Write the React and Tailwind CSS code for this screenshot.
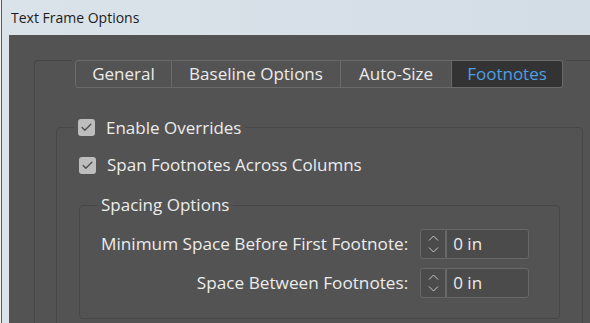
import { Check } from 'lucide-react';

const tabs = [
  { label: 'General', w: 'w-[97px]' },
  { label: 'Baseline Options', w: 'w-[169px]' },
  { label: 'Auto-Size', w: 'w-[111px]' },
  { label: 'Footnotes', w: 'w-[111px]', active: true },
];

function Checkbox() {
  return (
    <span className="w-[17px] h-[17px] rounded-[3px] bg-[#bdbdbd] flex items-center justify-center shrink-0">
      <Check className="w-[13px] h-[13px] text-[#4e4e4e]" strokeWidth={2.5} />
    </span>
  );
}

function Spinner({ value }) {
  return (
    <div className="flex h-[30px]">
      <div className="w-[26px] h-full border border-[#686868] rounded-l-[3px] bg-[#4b4b4b] flex flex-col items-center justify-between py-[5px]">
        <svg width="11" height="6" viewBox="0 0 11 6" className="text-[#c8c8c8]">
          <path d="M1 5.5 L5.5 1 L10 5.5" fill="none" stroke="currentColor" strokeWidth="1" />
        </svg>
        <svg width="11" height="6" viewBox="0 0 11 6" className="text-[#c8c8c8]">
          <path d="M1 0.5 L5.5 5 L10 0.5" fill="none" stroke="currentColor" strokeWidth="1" />
        </svg>
      </div>
      <div className="w-[83px] h-full border border-[#686868] rounded-r-[3px] bg-[#4b4b4b] flex items-center pl-[6px] text-[17px] text-[#ececec]">
        {value}
      </div>
    </div>
  );
}

export default function App() {
  return (
    <div
      className="w-[590px] h-[323px] overflow-hidden flex bg-[#d9e1e8] text-[17px]"
      style={{ fontFamily: '"Open Sans", "Noto Sans", sans-serif' }}
    >
      {/* sliver of the app behind */}
      <div className="w-[2px] h-full bg-[#f2f2f2] border-r border-[#5a5a5a]" />

      <div className="flex-1 min-h-0 flex flex-col rounded-tl-[6px] bg-[#dae2ea]">
        <div className="h-[35px] shrink-0 flex items-center pl-[9px] pb-[1px] text-[14px] text-[#1b1b1b] bg-gradient-to-r from-[#dbe3ea] to-[#d3dde6]">
          Text Frame Options
        </div>

        <div className="flex-1 min-h-0 ml-[7px] bg-[#535353] pl-[25px] pt-[25px]">
          <div className="h-full border-l border-t border-[#474747] rounded-tl-[4px]">
            {/* tab strip */}
            <div className="flex -mt-px">
              <div className="ml-[37px] px-[3px] bg-[#535353] flex">
                {tabs.map((t, i) => (
                  <div
                    key={t.label}
                    className={`${t.w} h-[28px] flex items-center justify-center border-y border-r border-[#6a6a6a] ${
                      i === 0 ? 'border-l rounded-l-[3px]' : ''
                    } ${i === tabs.length - 1 ? 'rounded-r-[3px]' : ''} ${
                      t.active ? 'bg-[#333333] text-[#4f9fe4]' : 'text-[#ececec]'
                    }`}
                  >
                    {t.label}
                  </div>
                ))}
              </div>
            </div>

            {/* footnote group */}
            <fieldset className="ml-[21px] mt-[28px] w-[527px] border border-[#474747] rounded-[4px] pb-[40px]">
              <legend className="ml-[17px] px-[4px] flex items-center gap-[11px] h-[22px] text-[#ececec]">
                <Checkbox />
                <span className="pt-[1px]">Enable Overrides</span>
              </legend>

              <div className="pl-[22px] mt-[16px] flex items-center gap-[11px] h-[22px] text-[#ececec]">
                <Checkbox />
                <span>Span Footnotes Across Columns</span>
              </div>

              <fieldset className="mx-[22px] mt-[18px] border border-[#474747] rounded-[4px] pb-[20px]">
                <legend className="ml-[17px] px-[4px] h-[22px] flex items-center text-[#ececec]">
                  Spacing Options
                </legend>

                <div className="mt-[13px] pl-[21px] grid grid-cols-[max-content_max-content] items-center gap-x-[12px] gap-y-[9px] text-[17.2px] text-[#ececec]">
                  <span className="text-right">Minimum Space Before First Footnote:</span>
                  <Spinner value="0 in" />
                  <span className="text-right">Space Between Footnotes:</span>
                  <Spinner value="0 in" />
                </div>
              </fieldset>
            </fieldset>
          </div>
        </div>
      </div>
    </div>
  );
}
